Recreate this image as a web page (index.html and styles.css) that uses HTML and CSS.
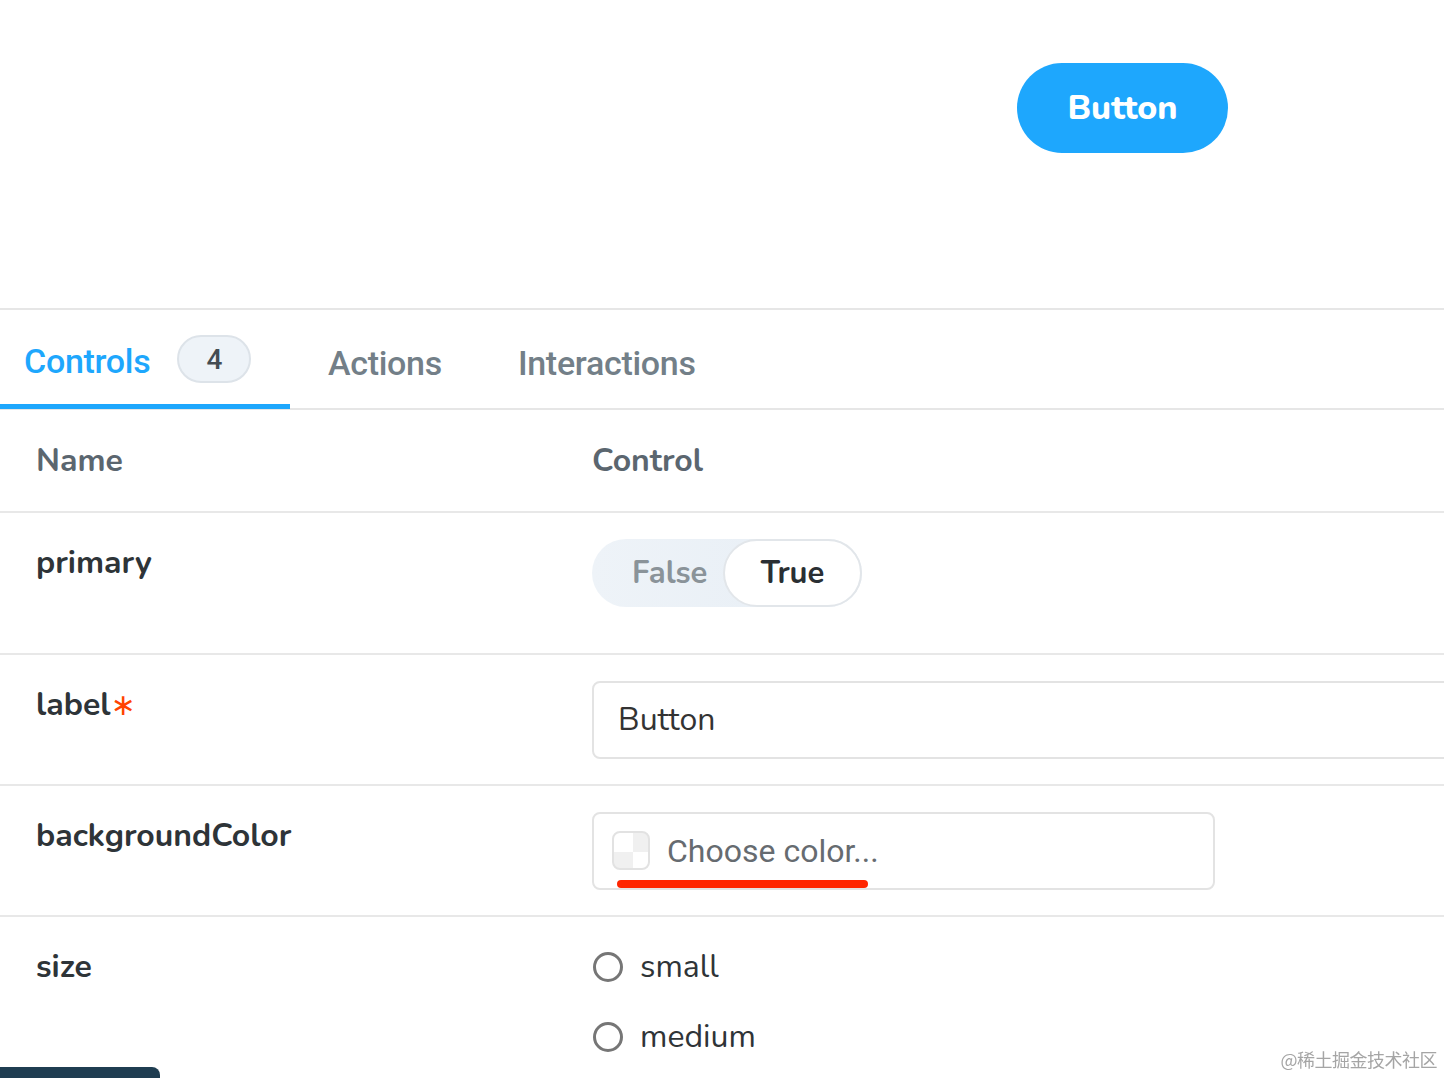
FILE: index.html
```html
<!DOCTYPE html>
<html>
<head>
<meta charset="utf-8">
<link rel="stylesheet" href="styles.css">
</head>
<body>
<div class="preview">
  <button class="sb-button">Button</button>
</div>
<div class="panel">
  <div class="tabs">
    <div class="tab tab-active">Controls <span class="badge">4</span></div>
    <div class="tab">Actions</div>
    <div class="tab">Interactions</div>
  </div>
  <div class="row row-head">
    <div class="name head">Name</div>
    <div class="control head">Control</div>
  </div>
  <div class="row">
    <div class="name">primary</div>
    <div class="control">
      <div class="toggle">
        <span class="opt-false">False</span>
        <span class="opt-true">True</span>
      </div>
    </div>
  </div>
  <div class="row">
    <div class="name">label<span class="req">∗</span></div>
    <div class="control">
      <div class="text-input">Button</div>
    </div>
  </div>
  <div class="row">
    <div class="name">backgroundColor</div>
    <div class="control">
      <div class="color-input">
        <span class="swatch"></span>
        <span class="placeholder">Choose color...</span>
        <span class="red-mark"></span>
      </div>
    </div>
  </div>
  <div class="row row-last">
    <div class="name">size</div>
    <div class="control radios">
      <label class="radio"><span class="circle"></span>small</label>
      <label class="radio"><span class="circle"></span>medium</label>
    </div>
  </div>
</div>
<div class="dock"></div>
<div class="watermark">@稀土掘金技术社区</div>
</body>
</html>
```

FILE: styles.css
```css
html, body {
  margin: 0;
  padding: 0;
  background: #ffffff;
  overflow: hidden;
  width: 1444px;
  height: 1078px;
}
body {
  font-family: "Nunito", "Lato", "Open Sans", sans-serif;
  color: #333333;
}
.preview {
  height: 310px;
  box-sizing: border-box;
  padding: 63px 0 0 1017px;
  border-bottom: 2px solid #e6e6e6;
}
.sb-button {
  width: 211px;
  height: 90px;
  border: none;
  border-radius: 45px;
  background: #1ea7fd;
  color: #ffffff;
  font-family: "Nunito", "Lato", sans-serif;
  font-weight: 800;
  font-size: 34px;
  padding: 0;
}
.panel {
  background: #ffffff;
}
.tabs {
  display: flex;
  height: 98px;
  border-bottom: 2px solid #e6e6e6;
  font-family: "Roboto", sans-serif;
  font-weight: 500;
  font-size: 34px;
  color: #737f88;
}
.tab {
  display: flex;
  align-items: center;
  padding: 6px 38px 0;
  box-sizing: border-box;
  height: 100px;
  letter-spacing: -0.3px;
}
.tab-active {
  width: 290px;
  padding: 8px 0 0 24px;
  color: #1ea7fd;
  border-bottom: 5px solid #1ea7fd;
  height: 99px;
}
.badge {
  display: inline-flex;
  align-items: center;
  justify-content: center;
  box-sizing: border-box;
  width: 74px;
  height: 48px;
  margin-left: 27px;
  margin-top: -4px;
  border-radius: 24px;
  background: #eef3f8;
  border: 2px solid #dde3e9;
  color: #444c52;
  font-size: 28px;
  font-weight: 500;
}
.row {
  display: flex;
  border-bottom: 2px solid #e8e8e8;
  padding: 26px 0 25px;
}
.row-head {
  padding: 25px 0 24px;
}
.name {
  width: 592px;
  padding-left: 36px;
  box-sizing: border-box;
  font-size: 32px;
  font-weight: 700;
  line-height: 48px;
  color: #2e3438;
  flex-shrink: 0;
}
.control {
  flex: 1;
  font-size: 32px;
  line-height: 48px;
}
.head,
.control.head {
  color: #5b666f;
  line-height: 52px;
  font-size: 32px;
  font-weight: 700;
}
.req {
  color: #ff4400;
  font-weight: 400;
  font-family: "DejaVu Sans", sans-serif;
  font-size: 30px;
}
.toggle {
  display: inline-flex;
  align-items: center;
  height: 68px;
  border-radius: 34px;
  background: linear-gradient(90deg, #eef3f8, #e7eef5);
  margin-bottom: 21px;
}
.opt-false {
  width: 131px;
  padding-left: 40px;
  box-sizing: border-box;
  font-weight: 700;
  color: #8a9399;
  font-size: 31px;
}
.opt-true {
  display: inline-flex;
  align-items: center;
  justify-content: center;
  width: 139px;
  height: 68px;
  box-sizing: border-box;
  border: 2px solid #e2e6ea;
  border-radius: 34px;
  background: #ffffff;
  font-weight: 700;
  color: #2a2f33;
  font-size: 31px;
}
.text-input {
  width: 1000px;
  height: 78px;
  box-sizing: border-box;
  border: 2px solid #e3e3e3;
  border-radius: 8px;
  padding-left: 24px;
  display: flex;
  align-items: center;
  color: #333333;
}
.color-input {
  position: relative;
  width: 623px;
  height: 78px;
  box-sizing: border-box;
  border: 2px solid #e3e3e3;
  border-radius: 8px;
  padding-left: 18px;
  display: flex;
  align-items: center;
  gap: 17px;
}
.swatch {
  width: 38px;
  height: 39px;
  box-sizing: border-box;
  border: 2px solid #e2e2e2;
  border-radius: 8px;
  background:
    conic-gradient(#f0f0f0 0 25%, #ffffff 0 50%, #f0f0f0 0 75%, #ffffff 0) 0 0 / 38px 38px;
  margin-bottom: 2px;
}
.placeholder {
  font-family: "Roboto", sans-serif;
  color: #666b70;
  font-size: 32px;
  margin-bottom: 0;
}
.red-mark {
  position: absolute;
  left: 23px;
  top: 66px;
  width: 251px;
  height: 8px;
  border-radius: 4px;
  background: #ff2600;
}
.radios {
  display: flex;
  flex-direction: column;
  gap: 22px;
}
.radio {
  display: flex;
  align-items: center;
  gap: 17px;
  color: #2f3437;
  font-size: 32px;
}
.circle {
  width: 30px;
  height: 30px;
  box-sizing: border-box;
  border: 3px solid #767676;
  border-radius: 50%;
  margin-left: 1px;
}
.dock {
  position: fixed;
  left: 0;
  bottom: 0;
  width: 160px;
  height: 11px;
  background: #1f3d51;
  border-top-right-radius: 8px;
}
.watermark {
  position: fixed;
  right: 7px;
  bottom: 6px;
  font-family: "Noto Sans CJK SC", sans-serif;
  font-size: 18px;
  color: #a5a5a5;
  letter-spacing: -0.5px;
}
```
